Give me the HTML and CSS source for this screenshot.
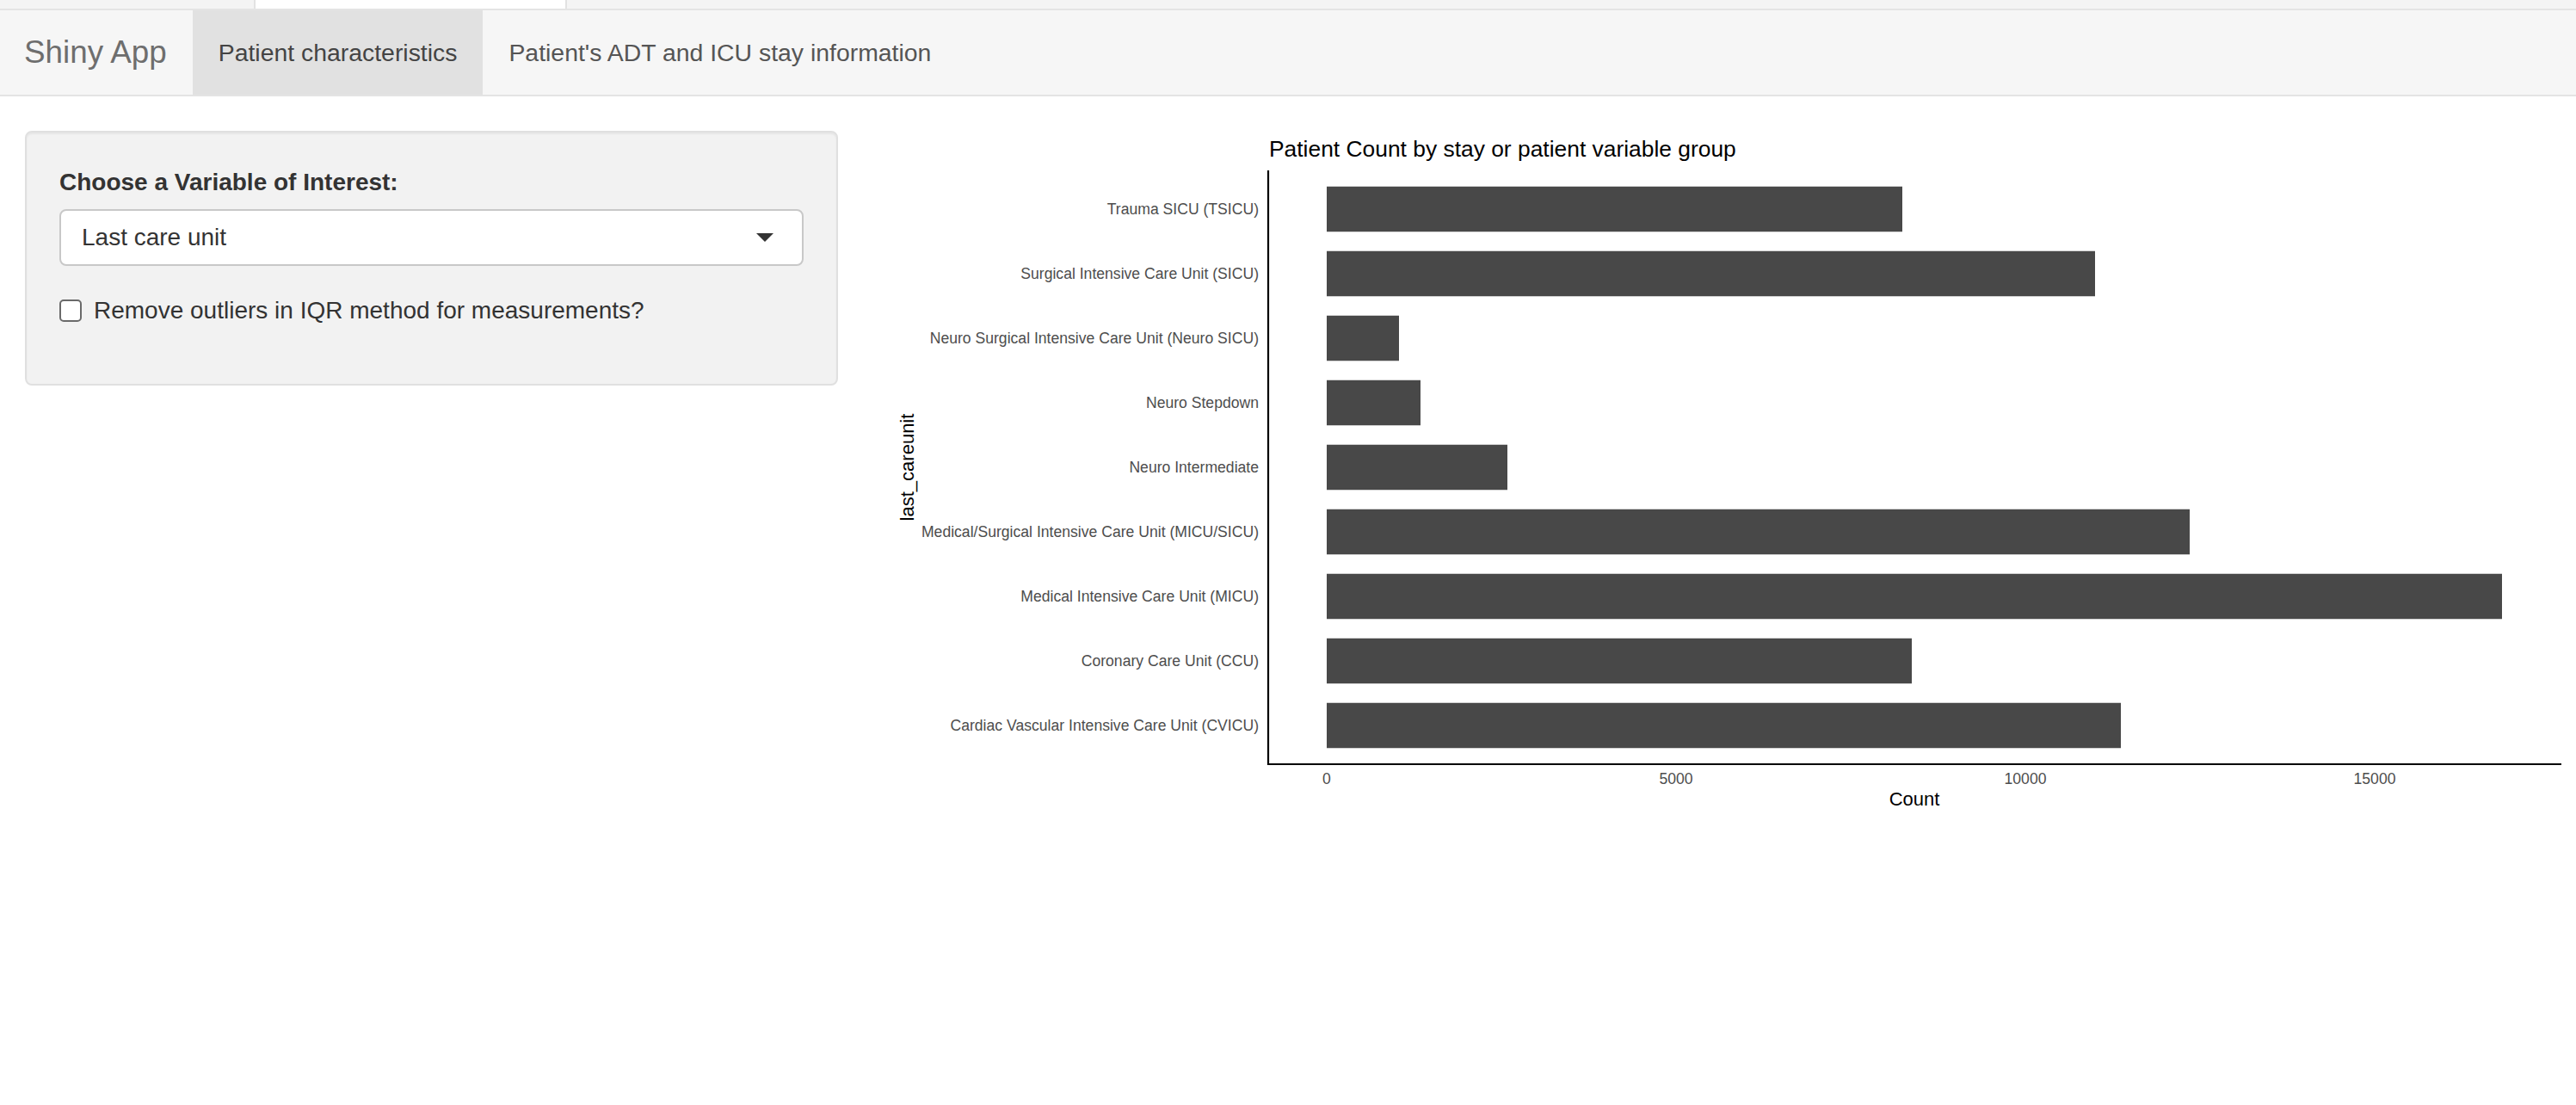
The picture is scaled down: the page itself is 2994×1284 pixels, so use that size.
FILE: index.html
```html
<!DOCTYPE html>
<html>
<head>
<meta charset="utf-8">
<title>Shiny App</title>
<link rel="stylesheet" href="styles.css">
</head>
<body>
<div class="topstrip"><div class="toptab"></div></div>
<nav class="navbar">
  <span class="brand">Shiny App</span>
  <ul class="nav">
    <li class="nav-item active"><a>Patient characteristics</a></li>
    <li class="nav-item"><a>Patient's ADT and ICU stay information</a></li>
  </ul>
</nav>
<div class="content">
  <div class="sidebar">
    <div class="well">
      <div class="form-group first">
        <label class="control-label">Choose a Variable of Interest:</label>
        <div class="select"><span class="select-value">Last care unit</span><span class="caret"></span></div>
      </div>
      <div class="form-group last">
        <label class="checkbox"><span class="box"></span><span>Remove outliers in IQR method for measurements?</span></label>
      </div>
    </div>
  </div>
  <div class="main">
    <svg class="plot" width="1960" height="800" viewBox="0 0 1960 800" xmlns="http://www.w3.org/2000/svg">
      <text class="ptitle" x="447" y="30">Patient Count by stay or patient variable group</text>
      <g class="bars">
        <rect x="514" y="64.75" width="669" height="52.5"/>
        <rect x="514" y="139.75" width="893" height="52.5"/>
        <rect x="514" y="214.75" width="84" height="52.5"/>
        <rect x="514" y="289.75" width="109" height="52.5"/>
        <rect x="514" y="364.75" width="210" height="52.5"/>
        <rect x="514" y="439.75" width="1003" height="52.5"/>
        <rect x="514" y="514.75" width="1366" height="52.5"/>
        <rect x="514" y="589.75" width="680" height="52.5"/>
        <rect x="514" y="664.75" width="923" height="52.5"/>
      </g>
      <g class="ylabs">
        <text x="435" y="97.3">Trauma SICU (TSICU)</text>
        <text x="435" y="172.3">Surgical Intensive Care Unit (SICU)</text>
        <text x="435" y="247.3">Neuro Surgical Intensive Care Unit (Neuro SICU)</text>
        <text x="435" y="322.3">Neuro Stepdown</text>
        <text x="435" y="397.3">Neuro Intermediate</text>
        <text x="435" y="472.3">Medical/Surgical Intensive Care Unit (MICU/SICU)</text>
        <text x="435" y="547.3">Medical Intensive Care Unit (MICU)</text>
        <text x="435" y="622.3">Coronary Care Unit (CCU)</text>
        <text x="435" y="697.3">Cardiac Vascular Intensive Care Unit (CVICU)</text>
      </g>
      <line class="axis" x1="446" y1="46" x2="446" y2="737"/>
      <line class="axis" x1="445" y1="736" x2="1949" y2="736"/>
      <g class="xlabs">
        <text x="514" y="759">0</text>
        <text x="920" y="759">5000</text>
        <text x="1326" y="759">10000</text>
        <text x="1732" y="759">15000</text>
      </g>
      <text class="atitle" x="1197" y="784">Count</text>
      <text class="atitle" transform="translate(34,391) rotate(-90)">last_careunit</text>
    </svg>
  </div>
</div>
</body>
</html>
```
FILE: styles.css
```css
html, body {
  margin: 0;
  padding: 0;
  background: #ffffff;
}
body {
  font-family: "Liberation Sans", Arial, Helvetica, sans-serif;
  font-size: 28px;
  line-height: 40px;
  color: #333333;
}
.topstrip {
  height: 10px;
  background: #f4f4f4;
  display: flex;
  padding-left: 295px;
  box-sizing: border-box;
}
.toptab {
  width: 364px;
  height: 10px;
  background: #ffffff;
  box-sizing: border-box;
  border-left: 2px solid #e2e2e2;
  border-right: 2px solid #e2e2e2;
}
.navbar {
  display: flex;
  align-items: stretch;
  height: 98px;
  background: #f6f6f6;
  border-top: 2px solid #e4e4e4;
  border-bottom: 2px solid #e4e4e4;
  margin-bottom: 40px;
}
.brand {
  display: flex;
  align-items: center;
  padding: 0 30px 0 28px;
  font-size: 36.8px;
  color: #6e6e6e;
}
.nav {
  display: flex;
  list-style: none;
  margin: 0;
  padding: 0;
}
.nav-item a {
  display: flex;
  align-items: center;
  height: 100%;
  padding: 0 30px;
  color: #555555;
  font-size: 28.4px;
}
.nav-item.active a {
  background: #e1e1e1;
  color: #444444;
}
.content {
  display: flex;
  align-items: flex-start;
  padding-left: 29px;
}
.sidebar {
  width: 945px;
  flex: none;
}
.well {
  background: #f2f2f2;
  border: 2px solid #e0e0e0;
  border-radius: 8px;
  padding: 38px;
  box-shadow: inset 0 2px 2px rgba(0, 0, 0, 0.05);
}
.form-group.first {
  margin-bottom: 32px;
}
.form-group.last {
  margin-bottom: 27px;
}
.control-label {
  display: block;
  font-weight: bold;
  margin-bottom: 11px;
}
.select {
  display: flex;
  align-items: center;
  justify-content: space-between;
  height: 66px;
  box-sizing: border-box;
  padding: 0 33px 0 24px;
  background: #ffffff;
  border: 2px solid #c8c8c8;
  border-radius: 8px;
  color: #333333;
}
.caret {
  width: 0;
  height: 0;
  border-style: solid;
  border-width: 10px 10px 0 10px;
  border-color: #333333 transparent transparent transparent;
}
.checkbox {
  display: flex;
  align-items: flex-start;
}
.box {
  width: 26px;
  height: 26px;
  flex: none;
  box-sizing: border-box;
  margin: 7px 14px 0 0;
  border: 2px solid #6a6a6a;
  border-radius: 5px;
  background: #ffffff;
}
.main {
  margin-left: 54px;
  flex: none;
}
.plot {
  display: block;
  font-family: "Liberation Sans", Arial, Helvetica, sans-serif;
}
.ptitle {
  font-size: 26.4px;
  fill: #000000;
}
.bars rect {
  fill: #484848;
}
.ylabs text {
  font-size: 17.6px;
  fill: #4d4d4d;
  text-anchor: end;
}
.xlabs text {
  font-size: 17.6px;
  fill: #4d4d4d;
  text-anchor: middle;
}
.atitle {
  font-size: 22px;
  fill: #000000;
  text-anchor: middle;
}
.axis {
  stroke: #000000;
  stroke-width: 2.2;
}
```
